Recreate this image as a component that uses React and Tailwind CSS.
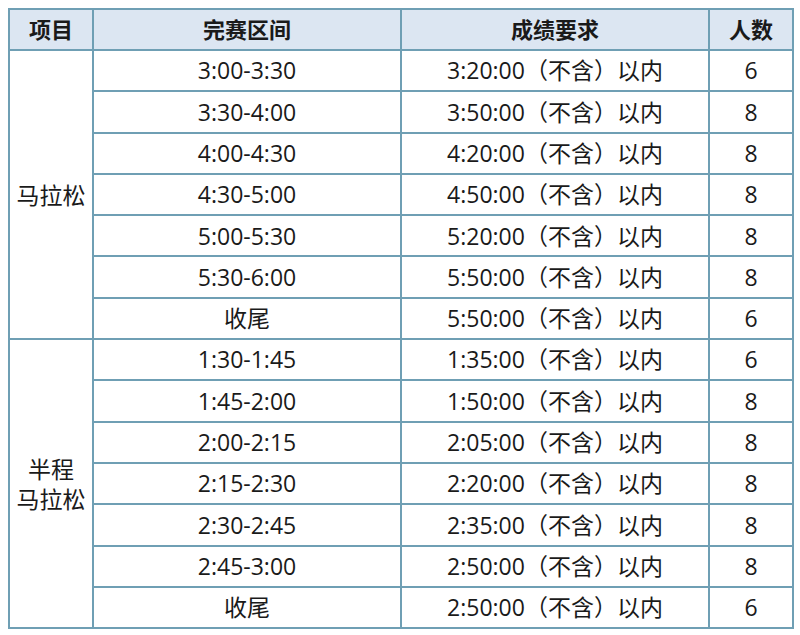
export default function App() {
  const marathon = [
    ["3:00-3:30", "3:20:00（不含）以内", "6"],
    ["3:30-4:00", "3:50:00（不含）以内", "8"],
    ["4:00-4:30", "4:20:00（不含）以内", "8"],
    ["4:30-5:00", "4:50:00（不含）以内", "8"],
    ["5:00-5:30", "5:20:00（不含）以内", "8"],
    ["5:30-6:00", "5:50:00（不含）以内", "8"],
    ["收尾", "5:50:00（不含）以内", "6"],
  ];
  const half = [
    ["1:30-1:45", "1:35:00（不含）以内", "6"],
    ["1:45-2:00", "1:50:00（不含）以内", "8"],
    ["2:00-2:15", "2:05:00（不含）以内", "8"],
    ["2:15-2:30", "2:20:00（不含）以内", "8"],
    ["2:30-2:45", "2:35:00（不含）以内", "8"],
    ["2:45-3:00", "2:50:00（不含）以内", "8"],
    ["收尾", "2:50:00（不含）以内", "6"],
  ];
  const cell = "border-2 border-[#6f9fb4] text-center align-middle p-0";
  const renderGroup = (rows, label) =>
    rows.map((r, i) => (
      <tr key={"g" + i} className="h-[41.3px]">
        {i === 0 && (
          <td rowSpan={7} className={cell + " leading-[30px]"}>
            {label}
          </td>
        )}
        <td className={cell}>{r[0]}</td>
        <td className={cell}>{r[1]}</td>
        <td className={cell}>{r[2]}</td>
      </tr>
    ));
  return (
    <div
      className="w-[800px] h-[635px] bg-white pt-[8px] pl-[8px] text-[#1a1a1a]"
      style={{ fontFamily: '"Open Sans", "Noto Sans CJK SC", sans-serif' }}
    >
      <table className="border-collapse table-fixed w-[784px] text-[23px]">
        <colgroup>
          <col className="w-[84px]" />
          <col className="w-[308px]" />
          <col className="w-[308px]" />
          <col className="w-[84px]" />
        </colgroup>
        <thead>
          <tr className="h-[41px] bg-[#dce6f2] font-bold text-[22px]">
            <th className={cell}>项目</th>
            <th className={cell}>完赛区间</th>
            <th className={cell}>成绩要求</th>
            <th className={cell}>人数</th>
          </tr>
        </thead>
        <tbody>
          {renderGroup(marathon, "马拉松")}
          {renderGroup(half, (
            <>
              半程
              <br />
              马拉松
            </>
          ))}
        </tbody>
      </table>
    </div>
  );
}
